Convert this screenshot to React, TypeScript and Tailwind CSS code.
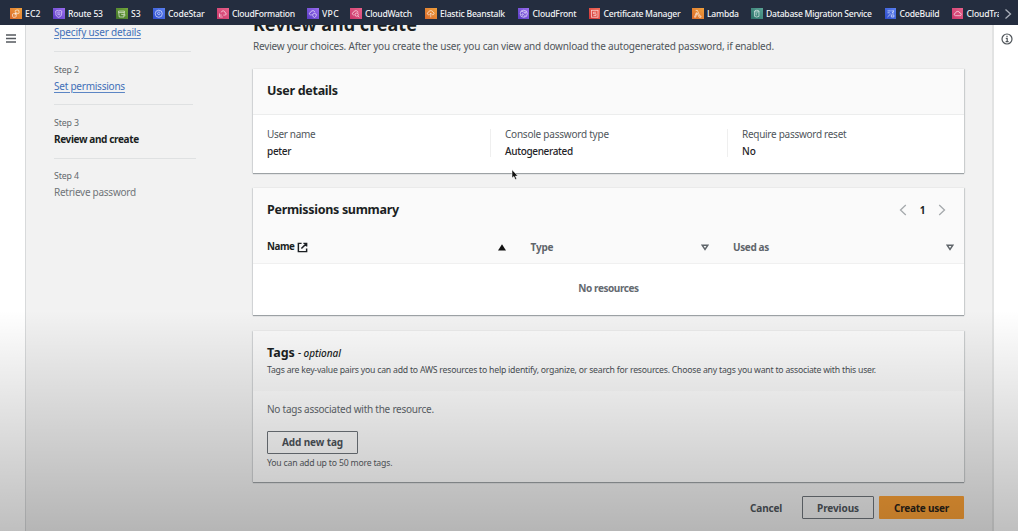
import type { ReactNode } from "react";

type Service = { name: string; width: string; tracking: string; tile: string; glyph: ReactNode };

const orange = "bg-linear-to-tr from-[#d9692b] to-[#f0a03c]";
const purple = "bg-linear-to-tr from-[#5a3bc4] to-[#9b6cf0]";
const green = "bg-linear-to-tr from-[#3f7328] to-[#74a83c]";
const blue = "bg-linear-to-tr from-[#2f4bc9] to-[#5a80f2]";
const pink = "bg-linear-to-tr from-[#c9366a] to-[#e8608a]";
const red = "bg-linear-to-tr from-[#cf3438] to-[#f26a58]";
const teal = "bg-linear-to-tr from-[#2a6f68] to-[#5aa596]";

const services: Service[] = [
  { name: "EC2", width: "w-[43px]", tracking: "tracking-[0.1px]", tile: orange, glyph: <g transform="rotate(-8 6 6)"><rect x="2.4" y="5.6" width="3.8" height="3.800" rx="1" /><rect x="5.800" y="2.400" width="3.800" height="3.800" rx="1" /><path d="M4.600 7.400 7.400 4.600" /></g> },
  { name: "Route 53", width: "w-[63px]", tracking: "tracking-[-0.19px]", tile: purple, glyph: <><path d="M6 9.8C3.6 8.8 2.6 7.6 3 5.6L2.8 3.4 4.2 2.6Q6 3.6 7.8 2.6L9.2 3.4 9 5.6Q9.4 8.6 6 9.8Z" /><path d="M4.2 5.2H7.8M4.6 7H7.4" /></> },
  { name: "S3", width: "w-[37px]", tracking: "tracking-[0px]", tile: green, glyph: <><path d="M2.600 3.200H8.800L8.300 9.400H3.400Z" /><path d="M2.800 4.800H8.600M5.400 6.600 9.900 7.400" /></> },
  { name: "CodeStar", width: "w-[64px]", tracking: "tracking-[-0.13px]", tile: blue, glyph: <><circle cx="6" cy="6" r="3.7" /><path d="M4.2 5.2 6 7.4 7.8 5.2M4.8 4.4H7.2" /></> },
  { name: "CloudFormation", width: "w-[90px]", tracking: "tracking-[-0.26px]", tile: pink, glyph: <><path d="M4.4 4.6Q5 2.4 7 3 8.2 3.4 8.2 4.6 9.8 5 9.6 6.4 9.4 7.4 8.2 7.4H6.6" /><path d="M2.6 5.6V9.4H6M2.6 7.4H5" /></> },
  { name: "VPC", width: "w-[43px]", tracking: "tracking-[0.3px]", tile: purple, glyph: <><path d="M5 7.2H3.6Q2.2 6.8 2.5 5.4 2.8 4.6 3.8 4.5 4.4 2.4 6.6 2.8 8 3.2 8.2 4.5" /><path d="M7.8 5.6 9.6 6.3V8Q9.4 9.3 7.8 9.9 6.2 9.3 6 8V6.3Z" /></> },
  { name: "CloudWatch", width: "w-[75px]", tracking: "tracking-[-0.26px]", tile: pink, glyph: <><path d="M4.6 7.2H3.6Q2.2 6.8 2.5 5.4 2.8 4.6 3.8 4.5 4.4 2.4 6.6 2.8 8.2 3.2 8.4 4.8" /><circle cx="7" cy="6.9" r="1.7" /><path d="M8.2 8.2 9.7 9.7" /></> },
  { name: "Elastic Beanstalk", width: "w-[92.5px]", tracking: "tracking-[-0.22px]", tile: orange, glyph: <><path d="M4.4 7H3.4Q2.2 6.6 2.4 5.3 2.8 4.5 3.7 4.4 4.4 2.3 6.4 2.7 8 3 8.3 4.4 9.8 4.8 9.5 6.2 9.2 7 8 7H7.4" /><path d="M6 9.8V5.6M4.6 6.8 6 5.4 7.4 6.8" /></> },
  { name: "CloudFront", width: "w-[71px]", tracking: "tracking-[-0.18px]", tile: purple, glyph: <><circle cx="6" cy="6" r="3.7" /><circle cx="4.8" cy="6.8" r=".8" /><circle cx="7.4" cy="4.8" r=".8" /><path d="M3.6 3.4 6 4.2M6.2 9.2 7.8 7.2" /></> },
  { name: "Certificate Manager", width: "w-[103.5px]", tracking: "tracking-[-0.25px]", tile: red, glyph: <><rect x="2.6" y="2.4" width="6.8" height="7.2" /><path d="M7.400 4.400H4.600V6H7.400V7.800H4.600" /></> },
  { name: "Lambda", width: "w-[59px]", tracking: "tracking-[-0.24px]", tile: orange, glyph: <path d="M3.8 2.5H5.6L8.2 8.3H9.4V9.6H7.4L5.2 5 3.8 9.6H2.6L4.6 4.6" /> },
  { name: "Database Migration Service", width: "w-[133.5px]", tracking: "tracking-[-0.27px]", tile: teal, glyph: <><ellipse cx="6" cy="3.3" rx="2.3" ry=".9" /><path d="M3.7 3.3V8.7Q6 10.2 8.3 8.7V3.3M5.4 5.2V7.8" /></> },
  { name: "CodeBuild", width: "w-[67px]", tracking: "tracking-[-0.23px]", tile: blue, glyph: <><path d="M2.6 3H6M2.6 5H5M2.6 9.4 6 6M6.6 3H9.4L7.2 5.2H9.4" /><path d="M6.6 7.2H9.2V9.4H6.6Z" /></> },
  { name: "CloudTrail", width: "w-[47.5px]", tracking: "tracking-[-0.18px]", tile: pink, glyph: <path d="M3.6 8Q2.2 7.8 2.3 6.4 2.6 5.4 3.6 5.4 4.2 3.2 6.2 3.5 7.8 3.8 8.1 5.2 9.8 5.4 9.7 6.8 9.5 8 8.2 8Z" /> },
];

function ServiceBar() {
  return (
    <nav className="relative z-10 flex h-[24.5px] shrink-0 items-center bg-[#242d3f] pt-[2.5px] pl-[10px]">
      <ul className="flex w-[989px] overflow-hidden">
        {services.map((s) => (
          <li key={s.name} className={`flex shrink-0 items-center gap-[3.5px] ${s.width}`}>
            <span className={`h-[11.5px] w-[11.5px] shrink-0 ${s.tile}`}>
              <svg viewBox="0 0 12 12" className="h-full w-full" fill="none" stroke="#fff" strokeOpacity=".72" strokeWidth=".85">
                {s.glyph}
              </svg>
            </span>
            <span className={`text-[8.6px] leading-[14px] font-medium whitespace-nowrap text-[#f2f3f5] ${s.tracking}`}>{s.name}</span>
          </li>
        ))}
      </ul>
      <svg viewBox="0 0 8 12" className="ml-[5px] h-[12px] w-[8px]" fill="none" stroke="#aab0ba" strokeWidth="1.3">
        <path d="M1.5 1.5 6.5 6 1.5 10.5" />
      </svg>
    </nav>
  );
}

const link = "text-[#3f6fb8] underline decoration-[#5b85c4] underline-offset-[1.5px]";

function Step({ n, rule, children }: { n: number; rule: string; children: ReactNode }) {
  return (
    <li className="h-[53.3px]">
      <div className={`h-px bg-[#dfe1e2] ${rule}`} />
      <div className="pt-[9.5px] text-[8.8px] tracking-[-0.14px] text-[#63686c]">Step {n}</div>
      <div>{children}</div>
    </li>
  );
}

function Steps() {
  return (
    <ol className="w-[199px] shrink-0 pl-[28px] text-[10px] leading-[16px]">
      <li className="h-[26.5px]">
        <a className={`relative -top-px tracking-[-0.16px] ${link}`}>Specify user details</a>
      </li>
      <Step n={2} rule="w-[137px]"><a className={`tracking-[-0.23px] ${link}`}>Set permissions</a></Step>
      <Step n={3} rule="w-[139px]"><span className="font-bold tracking-[-0.37px] text-[#1b1f23]">Review and create</span></Step>
      <Step n={4} rule="w-[142px]"><span className="tracking-[-0.26px] text-[#707579]">Retrieve password</span></Step>
    </ol>
  );
}

const card = "bg-white shadow-[0_1px_1px_0_#9da2a5,1px_0_1px_0_#d4d6d7,-1px_0_1px_0_#dcdedf]";
const title = "text-[12.5px] font-bold text-[#1b1f23]";

function Field({ label, value, className }: { label: ReactNode; value: ReactNode; className: string }) {
  return (
    <div className={`h-[28px] ${className}`}>
      <div className="-mt-[3px] leading-[16px] text-[#50565b]">{label}</div>
      <div className="mt-[1px] leading-[16px] font-medium text-[#1f2428]">{value}</div>
    </div>
  );
}

function UserDetails() {
  return (
    <section className={`h-[104.5px] ${card}`}>
      <header className="flex h-[46px] items-center border-b border-[#eceded] bg-[#fafafa] px-[14px] pt-[1px]">
        <h2 className={`tracking-[-0.27px] ${title}`}>User details</h2>
      </header>
      <div className="flex pt-[14px] pl-[14px]">
        <Field className="w-[223px]" label={<span className="tracking-[-0.32px]">User name</span>} value={<span className="tracking-[-0.3px]">peter</span>} />
        <Field className="w-[237px] border-l border-[#efefef] pl-[14px]" label={<span className="tracking-[-0.23px]">Console password type</span>} value={<span className="tracking-[-0.34px]">Autogenerated</span>} />
        <Field className="border-l border-[#efefef] pl-[14px]" label={<span className="tracking-[-0.28px]">Require password reset</span>} value="No" />
      </div>
    </section>
  );
}

function SortDown() {
  return (
    <svg viewBox="0 0 8 7" className="h-[7px] w-[8px]" fill="none" stroke="#5f656a" strokeWidth="1.4">
      <path d="M1.2 1.2H6.8L4 5.4Z" />
    </svg>
  );
}

function PermissionsSummary() {
  return (
    <section className={`mt-[15px] h-[127px] ${card}`}>
      <header className="flex h-[43px] items-center justify-between bg-[#fafafa] pt-[1.5px] pr-[18px] pl-[14px]">
        <h2 className={`tracking-[-0.3px] ${title}`}>Permissions summary</h2>
        <div className="flex items-center">
          <svg viewBox="0 0 8 12" className="h-[12px] w-[8px]" fill="none" stroke="#a5a9ac" strokeWidth="1.3"><path d="M6.8 1 1.5 6 6.8 11" /></svg>
          <span className="w-[31px] text-center text-[10px] font-bold text-[#1b1f23]">1</span>
          <svg viewBox="0 0 8 12" className="h-[12px] w-[8px]" fill="none" stroke="#a5a9ac" strokeWidth="1.3"><path d="M1.2 1 6.5 6 1.2 11" /></svg>
        </div>
      </header>
      <div className="flex h-[33px] items-center border-b border-[#f0f0f0] bg-[#fafafa] pt-[1.5px] pl-[14px] text-[10px] font-bold text-[#5f656a]">
        <div className="flex w-[263.5px] items-center pr-[24.5px] text-[#1b1f23]">
          <span className="text-[9.8px] tracking-[-0.45px]">Name</span>
          <svg viewBox="0 0 12 12" className="ml-[3px] h-[11px] w-[11px]" fill="none" stroke="#1b1f23" strokeWidth="1.6">
            <path d="M5 1.5H1.5V10.500H10.500V7M7 1.500H10.500V5M10.500 1.500 4.800 7.200" />
          </svg>
          <svg viewBox="0 0 8 7" className="ml-auto h-[7px] w-[8px]" fill="#111"><path d="M4 .3 8 6.6H0Z" /></svg>
        </div>
        <div className="flex w-[202.5px] items-center pr-[24.5px]">
          <span className="tracking-[-0.16px]">Type</span>
          <span className="ml-auto"><SortDown /></span>
        </div>
        <div className="flex flex-1 items-center pr-[10.5px]">
          <span className="tracking-[-0.38px]">Used as</span>
          <span className="ml-auto"><SortDown /></span>
        </div>
      </div>
      <div className="flex h-[49px] items-center justify-center text-[10px] font-bold tracking-[-0.43px] text-[#646a70]">No resources</div>
    </section>
  );
}

function Tags() {
  return (
    <section className={`mt-[16px] h-[151px] ${card}`}>
      <header className="h-[60px] bg-[#fafafa] pt-[12.5px] pl-[14px]">
        <h2 className={`flex items-baseline leading-[18px] ${title}`}>
          <span>Tags</span>
          <span className="ml-[3px] text-[10px] font-medium tracking-[-0.06px] italic">- optional</span>
        </h2>
        <p className="text-[8.7px] leading-[16px] tracking-[-0.222px] whitespace-nowrap text-[#4a5055]">
          Tags are key-value pairs you can add to AWS resources to help identify, organize, or search for resources. Choose any tags you want to associate with this user.
        </p>
      </header>
      <div className="flex flex-col items-start pt-[10px] pl-[14px]">
        <p className="text-[10px] leading-[16px] tracking-[-0.24px] text-[#61676c]">No tags associated with the resource.</p>
        <button className="mt-[14px] h-[23px] w-[91px] rounded-[1px] border border-[#6f757b] text-[10px] leading-[21px] font-bold tracking-[-0.12px] text-[#4d535a]">Add new tag</button>
        <p className="pt-[1px] text-[8.7px] leading-[16px] tracking-[-0.2px] text-[#5a6065]">You can add up to 50 more tags.</p>
      </div>
    </section>
  );
}

export default function App() {
  return (
    <div className="relative flex h-[531px] w-[1018px] flex-col overflow-hidden bg-[#f2f2f2] font-['Noto_Sans',sans-serif]">
      <ServiceBar />
      <div className="flex min-h-0 flex-1">
        <aside className="w-[26px] shrink-0 border-r border-[#d8dadb] bg-white pt-[9.5px] pl-[6px]">
          <svg viewBox="0 0 10 9" className="h-[9px] w-[10px]" stroke="#555a5f" strokeWidth="1.3"><path d="M0 1H10M0 4.5H10M0 8H10" /></svg>
        </aside>
        <main className="flex w-[966px] shrink-0">
          <Steps />
          <div className="ml-[28px] w-[711px]">
            <h1 className="-mt-[14px] h-[27.5px] text-[18px] leading-[26px] font-bold text-[#1b1f23]">Review and create</h1>
            <p className="text-[10px] leading-[16px] tracking-[-0.187px] whitespace-nowrap text-[#50565b]">
              Review your choices. After you create the user, you can view and download the autogenerated password, if enabled.
            </p>
            <div className="pt-[14.5px] text-[10px]">
              <UserDetails />
              <PermissionsSummary />
              <Tags />
            </div>
            <footer className="mt-[14px] flex items-center justify-end gap-[5px] text-[10px] leading-[22px] font-bold text-[#50565c]">
              <button className="mr-[15px] tracking-[-0.19px]">Cancel</button>
              <button className="h-[23px] w-[72px] rounded-[1px] border border-[#6f757b] tracking-[-0.1px]">Previous</button>
              <button className="h-[23px] w-[85px] rounded-[1px] bg-[#fba137] pt-px tracking-[-0.24px] text-[#2a2218]">Create user</button>
            </footer>
          </div>
        </main>
        <aside className="flex flex-1 justify-center border-l-2 border-[#e2e3e3] bg-white pt-[8.5px] pl-px">
          <svg viewBox="0 0 12 12" className="h-[12px] w-[12px]" fill="none" stroke="#4f555a" strokeWidth="1.2">
            <circle cx="6" cy="6" r="5" /><path d="M4.8 5.3H6.2V8.7M4.6 8.7H7.6M6 2.8V4.1" />
          </svg>
        </aside>
      </div>
      <svg viewBox="0 0 8 12" className="absolute top-[169px] left-[511px] h-[12px] w-[8px]">
        <path d="M1 .8V9L2.9 7.4 4.3 10.6 5.7 10 4.4 7H6.9Z" fill="#111" stroke="#fff" strokeWidth=".5" />
      </svg>
      <div className="pointer-events-none absolute inset-x-0 bottom-0 h-[221px] bg-linear-to-b from-black/0 to-black/25" />
    </div>
  );
}
